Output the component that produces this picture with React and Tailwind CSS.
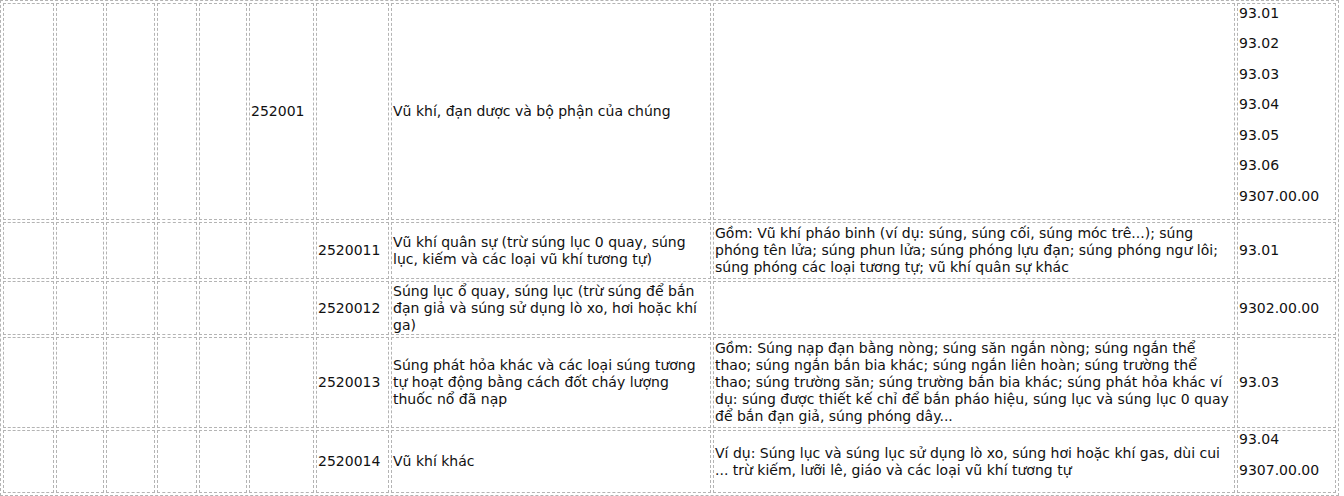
import React from 'react'

// widths of the 10 columns (border-box, px) and row heights
const colW = ['w-[51px]', 'w-[48px]', 'w-[49px]', 'w-[40px]', 'w-[48px]', 'w-[65px]', 'w-[73px]', 'w-[320px]', 'w-[522px]', 'w-[99px]']

const rows = [
  {
    h: 'h-[217px]',
    code: '252001',
    sub: '',
    name: ['Vũ khí, đạn dược và bộ phận của chúng'],
    desc: [],
    hs: ['93.01', '93.02', '93.03', '93.04', '93.05', '93.06', '9307.00.00'],
    list: true,
  },
  {
    h: 'h-[57px]',
    code: '',
    sub: '2520011',
    name: ['Vũ khí quân sự (trừ súng lục 0 quay, súng', 'lục, kiếm và các loại vũ khí tương tự)'],
    desc: [
      'Gồm: Vũ khí pháo binh (ví dụ: súng, súng cối, súng móc trê...); súng',
      'phóng tên lửa; súng phun lửa; súng phóng lựu đạn; súng phóng ngư lôi;',
      'súng phóng các loại tương tự; vũ khí quân sự khác',
    ],
    hs: ['93.01'],
  },
  {
    h: 'h-[54px]',
    code: '',
    sub: '2520012',
    name: ['Súng lục ổ quay, súng lục (trừ súng để bắn', 'đạn giả và súng sử dụng lò xo, hơi hoặc khí', 'ga)'],
    desc: [],
    hs: ['9302.00.00'],
  },
  {
    h: 'h-[91px]',
    code: '',
    sub: '2520013',
    name: ['Súng phát hỏa khác và các loại súng tương', 'tự hoạt động bằng cách đốt cháy lượng', 'thuốc nổ đã nạp'],
    desc: [
      'Gồm: Súng nạp đạn bằng nòng; súng săn ngắn nòng; súng ngắn thể',
      'thao; súng ngắn bắn bia khác; súng ngắn liên hoàn; súng trường thể',
      'thao; súng trường săn; súng trường bắn bia khác; súng phát hỏa khác ví',
      'dụ: súng được thiết kế chỉ để bắn pháo hiệu, súng lục và súng lục 0 quay',
      'để bắn đạn giả, súng phóng dây...',
    ],
    hs: ['93.03'],
  },
  {
    h: 'h-[63px]',
    code: '',
    sub: '2520014',
    name: ['Vũ khí khác'],
    desc: [
      'Ví dụ: Súng lục và súng lục sử dụng lò xo, súng hơi hoặc khí gas, dùi cui',
      '... trừ kiếm, lưỡi lê, giáo và các loại vũ khí tương tự',
    ],
    hs: ['93.04', '9307.00.00'],
    list: true,
  },
]

const cell = 'border border-dashed border-[#b4b4b4] px-px py-0 align-middle text-left'

function Lines({ lines }) {
  return lines.map((l, i) => (
    <span key={i} className="block whitespace-nowrap">{l}</span>
  ))
}

export default function App() {
  return (
    <div className="bg-white w-[1344px] h-[496px] overflow-hidden">
      <table className="table-fixed border-separate border-spacing-[2px] border border-dashed border-[#b4b4b4] w-[1339px] font-['DejaVu_Sans',Verdana,sans-serif] text-[14px] leading-[17px] text-[#111]">
        <tbody>
          {rows.map((r, ri) => (
            <tr key={ri} className={r.h}>
              {[0, 1, 2, 3, 4].map((c) => (
                <td key={c} className={`${cell} ${ri === 0 ? colW[c] : ''}`}></td>
              ))}
              <td className={`${cell} ${ri === 0 ? colW[5] : ''}`}>{r.code}</td>
              <td className={`${cell} ${ri === 0 ? colW[6] : ''}`}>{r.sub}</td>
              <td className={`${cell} ${ri === 0 ? colW[7] : ''}`}>
                <Lines lines={r.name} />
              </td>
              <td className={`${cell} ${ri === 0 ? colW[8] : ''}`}>
                <Lines lines={r.desc} />
              </td>
              <td className={`${cell} ${ri === 0 ? colW[9] : ''}`}>
                {r.list
                  ? r.hs.map((v) => (
                      <p key={v} className="mb-[13.5px]">{v}</p>
                    ))
                  : r.hs[0]}
              </td>
            </tr>
          ))}
        </tbody>
      </table>
    </div>
  )
}
